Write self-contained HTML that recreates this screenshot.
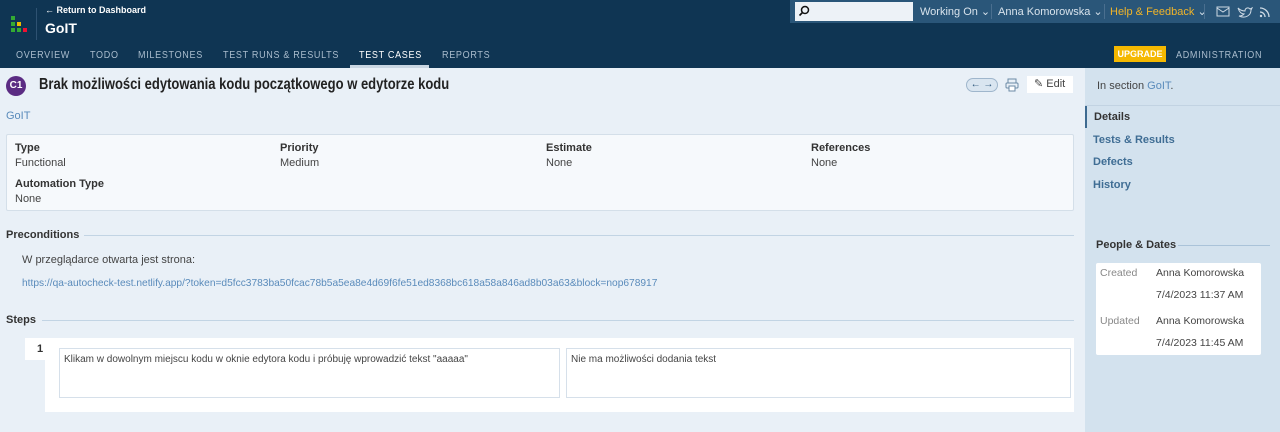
<!DOCTYPE html>
<html><head><meta charset="utf-8"><style>
*{box-sizing:border-box;margin:0;padding:0}
body{width:1280px;height:432px;overflow:hidden;font-family:"Liberation Sans",sans-serif;background:#e9f0f7;position:relative;color:#333}
.a{position:absolute;white-space:nowrap}
.hdr{position:absolute;left:0;top:0;width:1280px;height:68px;background:#0f3553}
.tb{position:absolute;left:790px;top:0;width:490px;height:23px;background:#2a5679}
.tab{font-size:10.5px;letter-spacing:0.8px;color:#a9bccd;top:49px;transform:scaleX(0.86);transform-origin:left}
.sb{position:absolute;left:1085px;top:68px;width:195px;height:364px;background:#d3e2ee}
.lbl{font-size:11px;font-weight:bold;color:#333}
.val{font-size:11px;color:#444}
.lnk{color:#5a8bbb}
</style></head><body>
<div class="hdr"></div>
<div class="tb"></div>
<div class="a" style="left:11px;top:16px;width:4px;height:4px;background:#3a3"></div>
<div class="a" style="left:11px;top:22px;width:4px;height:4px;background:#3a3"></div>
<div class="a" style="left:17px;top:22px;width:4px;height:4px;background:#eb0"></div>
<div class="a" style="left:11px;top:28px;width:4px;height:4px;background:#3a3"></div>
<div class="a" style="left:17px;top:28px;width:4px;height:4px;background:#3a3"></div>
<div class="a" style="left:23px;top:28px;width:4px;height:4px;background:#e13"></div>
<div class="a" style="left:36px;top:8px;width:1px;height:32px;background:#2e5272"></div>
<div class="a" style="left:45px;top:5px;font-size:9px;color:#fff;font-weight:bold">← Return to Dashboard</div>
<div class="a" style="left:45px;top:20px;font-size:14px;color:#fff;font-weight:bold">GoIT</div>
<div class="a tab" style="left:16px">OVERVIEW</div>
<div class="a tab" style="left:90px">TODO</div>
<div class="a tab" style="left:138px">MILESTONES</div>
<div class="a tab" style="left:223px">TEST RUNS &amp; RESULTS</div>
<div class="a tab" style="left:359px;color:#fff">TEST CASES</div>
<div class="a" style="left:350px;top:65px;width:79px;height:3px;background:#c9d6e2"></div>
<div class="a tab" style="left:442px">REPORTS</div>
<div class="a" style="left:1114px;top:46px;width:52px;height:16px;background:#f5b800;color:#fff;font-size:9px;font-weight:bold;text-align:center;line-height:16px">UPGRADE</div>
<div class="a tab" style="left:1176px">ADMINISTRATION</div>
<div class="a" style="left:795px;top:2px;width:118px;height:19px;background:#edf2f7"></div>
<svg class="a" style="left:798px;top:5px" width="12" height="12" viewBox="0 0 12 12"><circle cx="7" cy="5" r="3.5" fill="none" stroke="#111" stroke-width="1.5"/><line x1="4.5" y1="7.5" x2="1.5" y2="10.5" stroke="#111" stroke-width="1.6"/></svg>
<div class="a" style="left:920px;top:5px;font-size:11px;color:#d8e3ec">Working On ⌄</div>
<div class="a" style="left:991px;top:4px;width:1px;height:15px;background:#4a6f8f"></div>
<div class="a" style="left:998px;top:5px;font-size:11px;color:#d8e3ec">Anna Komorowska ⌄</div>
<div class="a" style="left:1104px;top:4px;width:1px;height:15px;background:#4a6f8f"></div>
<div class="a" style="left:1110px;top:5px;font-size:11px;color:#f0b429">Help &amp; Feedback <span style="color:#d8e3ec">⌄</span></div>
<div class="a" style="left:1204px;top:4px;width:1px;height:15px;background:#4a6f8f"></div>
<svg class="a" style="left:1216px;top:5px" width="60" height="13"><rect x="1" y="2" width="12" height="9" fill="none" stroke="#cdd9e4"/><path d="M1 3l6 4 6-4" fill="none" stroke="#cdd9e4"/><path d="M22 3c2 2 5 3 7 3 0-3 3-4 5-2l2-1-1 2c0 5-5 9-12 6 3 0 4-1 5-2-3 0-5-3-6-6z" fill="none" stroke="#cdd9e4"/><path d="M44 3a9 9 0 0 1 9 9M44 7a5 5 0 0 1 5 5" fill="none" stroke="#cdd9e4" stroke-width="1.3"/><circle cx="45" cy="11" r="1.2" fill="#cdd9e4"/></svg>
<div class="sb"></div>
<div class="a" style="left:1097px;top:80px;font-size:11px;color:#444">In section <span class="lnk">GoIT</span>.</div>
<div class="a" style="left:1085px;top:105px;width:195px;height:1px;background:#c2d3e2"></div>
<div class="a" style="left:1085px;top:106px;width:2px;height:22px;background:#3d6a90"></div>
<div class="a" style="left:1094px;top:111px;font-size:11px;font-weight:bold;color:#333">Details</div>
<div class="a" style="left:1093px;top:134px;font-size:11px;font-weight:bold;color:#3f6d94">Tests &amp; Results</div>
<div class="a" style="left:1093px;top:156px;font-size:11px;font-weight:bold;color:#3f6d94">Defects</div>
<div class="a" style="left:1093px;top:179px;font-size:11px;font-weight:bold;color:#3f6d94">History</div>
<div class="a" style="left:1096px;top:239px;font-size:11px;font-weight:bold;color:#333">People &amp; Dates</div>
<div class="a" style="left:1178px;top:245px;width:92px;height:1px;background:#aac3d9"></div>
<div class="a" style="left:1096px;top:263px;width:165px;height:92px;background:#fff;border-radius:2px"></div>
<div class="a" style="left:1100px;top:267px;font-size:10.5px;color:#888">Created</div>
<div class="a" style="left:1156px;top:267px;font-size:10.5px;color:#444">Anna Komorowska</div>
<div class="a" style="left:1156px;top:289px;font-size:10.5px;color:#444">7/4/2023 11:37 AM</div>
<div class="a" style="left:1100px;top:315px;font-size:10.5px;color:#888">Updated</div>
<div class="a" style="left:1156px;top:315px;font-size:10.5px;color:#444">Anna Komorowska</div>
<div class="a" style="left:1156px;top:337px;font-size:10.5px;color:#444">7/4/2023 11:45 AM</div>
<div class="a" style="left:6px;top:76px;width:20px;height:20px;border-radius:50%;background:#5b2c83;color:#fff;font-size:10px;font-weight:bold;text-align:center;line-height:20px">C1</div>
<div class="a" style="left:39px;top:76px;font-size:15.5px;font-weight:bold;color:#222;transform:scaleX(0.84);transform-origin:left">Brak możliwości edytowania kodu początkowego w edytorze kodu</div>
<div class="a" style="left:966px;top:78px;width:32px;height:14px;border:1px solid #9fb6cc;border-radius:8px;background:#d9e5f0;font-size:10px;line-height:12px;text-align:center;color:#2a557a">← →</div>
<svg class="a" style="left:1005px;top:78px" width="14" height="14"><rect x="3" y="1" width="8" height="4" fill="none" stroke="#6b8aa6"/><rect x="1" y="5" width="12" height="5" rx="1" fill="none" stroke="#6b8aa6"/><rect x="4" y="8" width="6" height="5" fill="#fff" stroke="#6b8aa6"/></svg>
<div class="a" style="left:1027px;top:76px;width:46px;height:17px;background:#fff;font-size:11px;color:#444;line-height:17px;padding-left:7px">✎ Edit</div>
<div class="a lnk" style="left:6px;top:110px;font-size:11px">GoIT</div>
<div class="a" style="left:6px;top:134px;width:1068px;height:77px;background:#f6f9fc;border:1px solid #d4dfe9;border-radius:2px"></div>
<div class="a lbl" style="left:15px;top:142px">Type</div><div class="a val" style="left:15px;top:157px">Functional</div>
<div class="a lbl" style="left:280px;top:142px">Priority</div><div class="a val" style="left:280px;top:157px">Medium</div>
<div class="a lbl" style="left:546px;top:142px">Estimate</div><div class="a val" style="left:546px;top:157px">None</div>
<div class="a lbl" style="left:811px;top:142px">References</div><div class="a val" style="left:811px;top:157px">None</div>
<div class="a lbl" style="left:15px;top:178px">Automation Type</div><div class="a val" style="left:15px;top:193px">None</div>
<div class="a lbl" style="left:6px;top:229px">Preconditions</div>
<div class="a" style="left:84px;top:235px;width:990px;height:1px;background:#c2d4e4"></div>
<div class="a val" style="left:22px;top:254px">W przeglądarce otwarta jest strona:</div>
<div class="a lnk" style="left:22px;top:278px;font-size:10.2px">https://qa-autocheck-test.netlify.app/?token=d5fcc3783ba50fcac78b5a5ea8e4d69f6fe51ed8368bc618a58a846ad8b03a63&amp;block=nop678917</div>
<div class="a lbl" style="left:6px;top:314px">Steps</div>
<div class="a" style="left:42px;top:320px;width:1032px;height:1px;background:#c2d4e4"></div>
<div class="a" style="left:25px;top:338px;width:26px;height:22px;background:#fff"></div>
<div class="a" style="left:45px;top:338px;width:1029px;height:74px;background:#fff"></div>
<div class="a" style="left:37px;top:343px;font-size:11px;font-weight:bold">1</div>
<div class="a" style="left:59px;top:348px;width:501px;height:50px;border:1px solid #d6e0ea;font-size:10px;padding:5px 4px;color:#444">Klikam w dowolnym miejscu kodu w oknie edytora kodu i próbuję wprowadzić tekst "aaaaa"</div>
<div class="a" style="left:566px;top:348px;width:505px;height:50px;border:1px solid #d6e0ea;font-size:10px;padding:5px 4px;color:#444">Nie ma możliwości dodania tekst</div>
</body></html>
